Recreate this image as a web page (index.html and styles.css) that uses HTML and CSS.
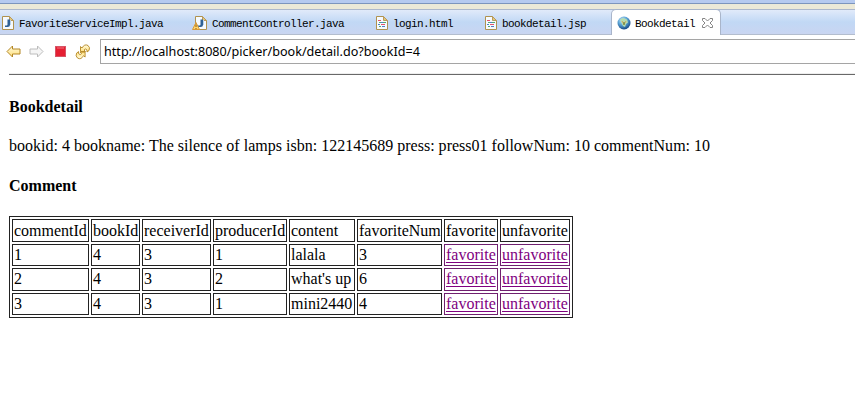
FILE: index.html
```html
<!DOCTYPE html>
<html lang="en">
<head>
<meta charset="utf-8">
<title>Bookdetail</title>
<link rel="stylesheet" href="styles.css">
</head>
<body>
<svg width="0" height="0" class="defs">
  <defs>
    <linearGradient id="gold" x1="0" y1="0" x2="0" y2="1"><stop offset="0" stop-color="#fffbe0"/><stop offset="1" stop-color="#ffdf78"/></linearGradient>
    <radialGradient id="sea" cx=".4" cy=".3" r=".7"><stop offset="0" stop-color="#d5edfa"/><stop offset=".5" stop-color="#5ba4d6"/><stop offset="1" stop-color="#174a86"/></radialGradient>
    <symbol id="page" viewBox="0 0 12 14"><path d="M.5.5h7l4 4v9H.5z" fill="#f5faff" stroke="#b0924f"/><path d="M7.500.5v4h4z" fill="#e3c77c" stroke="#b99a5c"/></symbol>
    <symbol id="java" viewBox="0 0 12 14"><use href="#page" width="12" height="14"/><path d="M5.500 3.500h2.500v5q0 2.500-2.500 2.500H3V9.500h1.500q1 0 1-1V3.500z" fill="#2d6096"/><path d="M8.500 4v5" stroke="#b9d3ea"/></symbol>
    <symbol id="markup" viewBox="0 0 12 14"><use href="#page" width="12" height="14"/><path d="M2 4.500h3M5 8.500h4" stroke="#e2556f"/><path d="M3 6.500h2M7 6.500h3M3 10.500h2" stroke="#55a970"/><path d="M5 6.500h2M2 8.500h2M6 10.500h3" stroke="#5080c8"/></symbol>
  </defs>
</svg>
<div class="edge"></div>
<nav class="tabs">
  <div class="tab t1"><svg width="12" height="14"><use href="#java"/></svg><span>FavoriteServiceImpl.java</span></div>
  <div class="tab t2"><svg width="15" height="14" viewBox="0 0 15 14"><use href="#java" x="3" width="12" height="14"/><path d="M4 6.500 7.500 13.500h-7z" fill="#ffd56a" stroke="#d99a3a" stroke-linejoin="round"/><path d="M4 8.500v2.500M4 12v1" stroke="#8a5a10"/></svg><span>CommentController.java</span></div>
  <div class="tab t3"><svg width="12" height="14"><use href="#markup"/></svg><span>login.html</span></div>
  <div class="tab t4"><svg width="12" height="14"><use href="#markup"/></svg><span>bookdetail.jsp</span></div>
  <div class="tab active"><svg width="14" height="14" viewBox="0 0 14 14"><circle cx="7" cy="7" r="6.500" fill="url(#sea)"/><path d="M3 3.500 6 2l4 1.500 1 3-2 1.500-1 3-2-1-1.500-3z" fill="#b5dcae"/><path d="m5 5 2 3.500 2-3.500" fill="none" stroke="#d2a45c"/><path d="M7 6v3" stroke="#4b7a34"/></svg><span>Bookdetail</span><svg class="close" width="11" height="10" viewBox="0 0 11 10"><path d="M.5.5h2.500l2.500 2.500L8 .5h2.500v2L8 5l2.500 2.500v2H8L5.500 7 3 9.500H.5v-2L3 5 .5 2.500z" fill="#fff" stroke="#858585"/></svg></div>
</nav>
<div class="toolbar">
  <svg class="tools" width="85" height="18" viewBox="0 0 85 18">
    <path d="M6.500 3 1 8.500 6.500 14v-3h7.500V6H6.500z" fill="url(#gold)" stroke="#b38624" stroke-linejoin="round"/>
    <path d="M31.500 3 37 8.500 31.500 14v-3H24V6h7.500z" fill="#f5f5f5" stroke="#bcbcbc" stroke-linejoin="round"/>
    <rect x="49.500" y="3.500" width="10" height="10" fill="#e51f32" stroke="#d65566"/><path d="M51 5h7" stroke="#f2747e"/>
    <path id="turn" d="M74.500 3.500v5h5L78 7q1.500-2 3 0v2l2-1.500q1.500-3-1-5Q78.500.5 76 5z" fill="url(#gold)" stroke="#b38624" stroke-width=".9" stroke-linejoin="round"/>
    <use href="#turn" transform="rotate(180 76.800 8.800)"/>
  </svg>
  <div class="address"><span>http://localhost:8080/picker/book/detail.do?bookId=4</span></div>
</div>
<main>
  <h4>Bookdetail</h4>
  <p>bookid: 4 bookname: The silence of lamps isbn: 122145689 press: press01 followNum: 10 commentNum: 10</p>
  <h4>Comment</h4>
  <table>
    <colgroup><col class="c1"><col class="c2"><col class="c3"><col class="c4"><col class="c5"><col class="c6"><col class="c7"><col class="c8"></colgroup>
    <tr class="tall"><td>commentId</td><td>bookId</td><td>receiverId</td><td>producerId</td><td>content</td><td>favoriteNum</td><td>favorite</td><td>unfavorite</td></tr>
    <tr><td>1</td><td>4</td><td>3</td><td>1</td><td>lalala</td><td>3</td><td class="link"><a href="#">favorite</a></td><td class="link"><a href="#">unfavorite</a></td></tr>
    <tr class="tall upper"><td>2</td><td>4</td><td>3</td><td>2</td><td>what's up</td><td>6</td><td class="link"><a href="#">favorite</a></td><td class="link"><a href="#">unfavorite</a></td></tr>
    <tr><td>3</td><td>4</td><td>3</td><td>1</td><td>mini2440</td><td>4</td><td class="link"><a href="#">favorite</a></td><td class="link"><a href="#">unfavorite</a></td></tr>
  </table>
</main>
</body>
</html>
```
FILE: styles.css
```css
* { box-sizing: border-box; }
body { margin: 0; background: #fff; color: #000; font-family: "Liberation Serif", serif; font-size: 16px; overflow: hidden; }
.defs { display: block; height: 0; }
.edge { height: 9px; background: #ece9d8; border-top: 3px solid #b6caf0; box-shadow: inset 0 1px #7d95bd; }
.tabs { height: 26px; display: flex; background: linear-gradient(#e1eafa, #c1d8f5 50%, #c9d5f1); border-top: 1px solid #adb8cd; border-bottom: 1px solid #b3bdce; }
.tab { display: flex; align-items: center; height: 24px; padding-top: 2px; font: 11px/14px "Liberation Mono", monospace; letter-spacing: -.6px; white-space: pre; flex: none; }
.tab svg { flex: none; }
.tab span { margin-left: 5px; padding-top: 2px; }
.t1 { width: 190px; padding-left: 2px; }
.t2 { width: 186px; padding-left: 2px; }
.t3 { width: 109px; }
.t4 { width: 126px; }
.active { width: 110px; height: 26px; margin-top: -1px; padding-left: 5px; padding-top: 1px; background: #fff; border: 1px solid #a9b5ca; border-bottom: 0; border-radius: 5px 5px 0 0; }
.active span { margin-left: 4px; }
.tab .close { margin-left: 7px; }
.toolbar { height: 39px; display: flex; padding-top: 4px; }
.tools { margin: 4px 9px 0 6px; flex: none; }
.address { flex: 1; height: 25px; border: 1px solid #a5a5a5; border-right: 0; padding-left: 3px; font: 12.6px/23px "Noto Sans", sans-serif; white-space: nowrap; }
main { margin-left: 9px; border-top: 1px solid #696969; box-shadow: 0 -1px #eee; padding-top: 22px; }
h4 { margin: 0; font-size: 16px; line-height: 20px; }
p { margin: 19px 0 20px; line-height: 20px; letter-spacing: .01px; }
table { width: 564px; table-layout: fixed; border: 1px solid #222; border-spacing: 2px; margin-top: 20px; }
td { border: 1px solid #222; padding: 0 1px; height: 22px; line-height: 20px; white-space: nowrap; }
.tall td { height: 23px; }
.upper td { padding-bottom: 1px; }
.link { border-color: #70206f; }
a { color: #800080; text-decoration: underline; text-underline-offset: 2px; text-decoration-skip-ink: none; }
.c1 { width: 77px; } .c2 { width: 49px; } .c3 { width: 69px; } .c4 { width: 74px; }
.c5 { width: 66px; } .c6 { width: 85px; } .c7 { width: 54px; } .c8 { width: 70px; }
```
